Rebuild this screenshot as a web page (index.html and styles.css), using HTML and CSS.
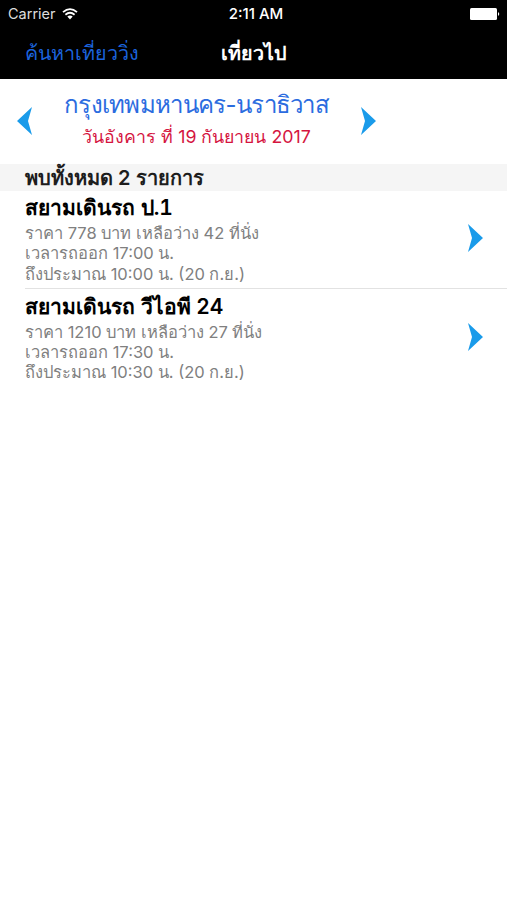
FILE: index.html
```html
<!DOCTYPE html>
<html lang="th"><head><meta charset="utf-8"><title>เที่ยวไป</title><link rel="stylesheet" href="styles.css"></head>
<body>
<header>
<div class="status"><div class="carrier"><span>Carrier</span><svg class="wifi" viewBox="0 0 16 12"><path d="M1 4.2Q8-2 15 4.2M3.4 6.7Q8 2.8 12.6 6.7" fill="none" stroke="#fff" stroke-width="1.8"/><path d="M5.3 8.6Q8 6.4 10.7 8.6L8 11.5Z" fill="#fff"/></svg></div><div class="clock">2:11 AM</div><svg class="battery" viewBox="0 0 30 12"><rect x="0" y="0" width="27" height="12" rx="1.5" fill="#fff"/><path d="M28 4Q30.5 6 28 8Z" fill="#fff"/></svg></div>
<nav><a class="back">ค้นหาเที่ยววิ่ง</a><h1>เที่ยวไป</h1></nav>
</header>
<section class="route">
<svg class="arrow" viewBox="0 0 16 28"><path d="M15 0L0 14L15 28L11 14Z"/></svg>
<div class="info"><div class="cities">กรุงเทพมหานคร-นราธิวาส</div><div class="date">วันอังคาร ที่ 19 กันยายน 2017</div></div>
<svg class="arrow" viewBox="0 0 16 28"><path d="M1 0L16 14L1 28L5 14Z"/></svg>
</section>
<div class="count">พบทั้งหมด 2 รายการ</div>
<main>
<article><div><h2>สยามเดินรถ ป.1</h2><p>ราคา 778 บาท เหลือว่าง 42 ที่นั่ง</p><p>เวลารถออก 17:00 น.</p><p>ถึงประมาณ 10:00 น. (20 ก.ย.)</p></div><svg class="arrow" viewBox="0 0 16 28"><path d="M1 0L16 14L1 28L5 14Z"/></svg></article>
<article><div><h2>สยามเดินรถ วีไอพี 24</h2><p>ราคา 1210 บาท เหลือว่าง 27 ที่นั่ง</p><p>เวลารถออก 17:30 น.</p><p>ถึงประมาณ 10:30 น. (20 ก.ย.)</p></div><svg class="arrow" viewBox="0 0 16 28"><path d="M1 0L16 14L1 28L5 14Z"/></svg></article>
</main>
</body></html>
```
FILE: styles.css
```css
*{box-sizing:border-box;margin:0;padding:0}
body{background:#fff;font-family:Inter,Thonburi,serif;height:900px;overflow:hidden}
header{background:#000;color:#fff;height:79px}
.status{height:27px;display:grid;grid-template-columns:1fr auto 1fr;align-items:center;padding:0 7px 0 8px;font-size:14px}
.carrier{display:flex;align-items:center;gap:6px;font-size:14.5px;color:#ddd}
.wifi{width:16px;height:12px}
.clock{font-weight:500;font-size:15px;padding-left:4px}
.battery{width:30px;height:12px;justify-self:end}
nav{height:51px;display:grid;grid-template-columns:1fr auto 1fr;align-items:center;padding:0 25px}
.back{color:#1b63dc;font-size:19.7px;white-space:nowrap}
h1{font-size:19.7px;font-weight:600}
.route{height:85px;display:flex;align-items:center;padding-left:17px}
.arrow{width:16px;height:28px;fill:#1a9bea;flex:none;margin-top:-1px}
.info{width:327px;text-align:center;white-space:nowrap;margin-top:-2px}
.cities{color:#2b6cdf;font-size:24px;line-height:32px;letter-spacing:-.7px}
.date{color:#d5153f;font-size:17.8px;line-height:32px}
.count{height:27px;background:#f5f5f5;padding-left:25px;font-size:20px;line-height:28px;font-weight:600;color:#1d1d1d}
article{margin-left:25px;height:98px;display:flex;justify-content:space-between;align-items:center;padding:0 24px 2px 0;border-bottom:1px solid #e2e2e2;white-space:nowrap}
article:last-child{border:0}
h2{font-size:21px;line-height:30px;font-weight:600;font-variant-numeric:tabular-nums}
p{font-size:16.5px;line-height:20.3px;color:#808080}
```
